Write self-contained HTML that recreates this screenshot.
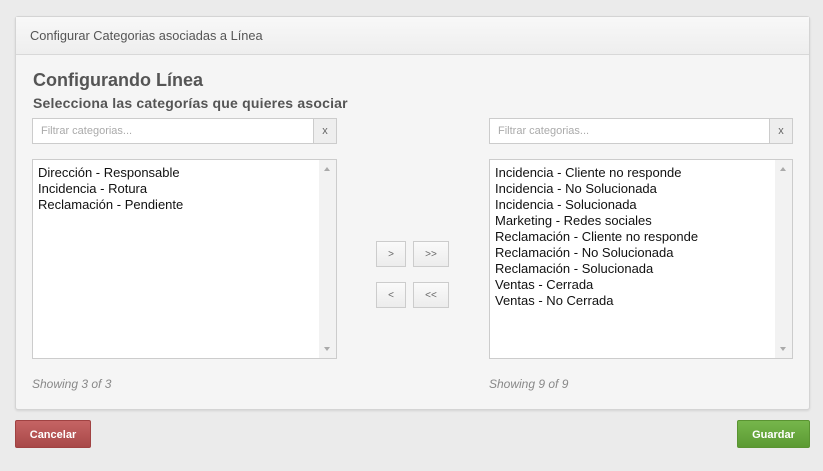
<!DOCTYPE html>
<html><head><style>
*{box-sizing:border-box;margin:0;padding:0}
body{width:823px;height:471px;background:#ebebeb;font-family:"Liberation Sans",sans-serif;position:relative;overflow:hidden}
.panel{position:absolute;left:15px;top:16px;width:795px;height:394px;background:#f5f5f5;border:1px solid #d4d4d4;border-radius:3px;box-shadow:0 1px 2px rgba(0,0,0,.1)}
.hdr{height:38px;border-bottom:1px solid #d8d8d8;background:linear-gradient(#f8f8f8,#eeeeee);font-size:12.8px;color:#555;padding:11px 14px}
h1{position:absolute;left:17px;top:53px;font-size:18px;color:#555;font-weight:bold}
h2{position:absolute;left:17px;top:78px;font-size:14px;letter-spacing:0.2px;color:#555;font-weight:bold}
.f{position:absolute;height:26px;border:1px solid #ccc;background:#fff;font-size:11px;color:#aaa;padding:6px 8px}
.f .x{position:absolute;right:0;top:0;width:23px;height:24px;border-left:1px solid #ccc;background:#eee;color:#666;text-align:center;font-size:11px;padding-top:6px}
.l{position:absolute;height:200px;border:1px solid #ccc;background:#fff;font-size:13px;color:#111;padding:5px 5px;line-height:16px}
.l .sb{position:absolute;right:0;top:0;width:17px;height:198px;background:#f2f2f2}
.l .sb:before{content:"";position:absolute;left:5px;top:7px;border:3.5px solid transparent;border-bottom:4px solid #aaa;border-top:0}
.l .sb:after{content:"";position:absolute;left:5px;bottom:7px;border:3.5px solid transparent;border-top:4px solid #aaa;border-bottom:0}
.b{position:absolute;height:26px;border:1px solid #ccc;background:linear-gradient(#fafafa,#ececec);font-size:10px;color:#666;text-align:center;padding-top:7px}
.s{position:absolute;top:360px;font-size:12px;font-style:italic;color:#888}
.btn{position:absolute;top:420px;height:28px;color:#fff;font-weight:bold;font-size:11px;text-align:center;padding-top:8px;border-radius:2px}
</style></head><body>
<div class="panel">
<div class="hdr">Configurar Categorias asociadas a Línea</div>
<h1>Configurando Línea</h1>
<h2>Selecciona las categorías que quieres asociar</h2>
<div class="f" style="left:16px;top:101px;width:305px">Filtrar categorias...<div class="x">x</div></div>
<div class="f" style="left:473px;top:101px;width:304px">Filtrar categorias...<div class="x">x</div></div>
<div class="l" style="left:16px;top:142px;width:305px">Dirección - Responsable<br>Incidencia - Rotura<br>Reclamación - Pendiente<div class="sb"></div></div>
<div class="l" style="left:473px;top:142px;width:304px">Incidencia - Cliente no responde<br>Incidencia - No Solucionada<br>Incidencia - Solucionada<br>Marketing - Redes sociales<br>Reclamación - Cliente no responde<br>Reclamación - No Solucionada<br>Reclamación - Solucionada<br>Ventas - Cerrada<br>Ventas - No Cerrada<div class="sb"></div></div>
<div class="b" style="left:360px;top:224px;width:30px">&gt;</div>
<div class="b" style="left:397px;top:224px;width:36px">&gt;&gt;</div>
<div class="b" style="left:360px;top:265px;width:30px">&lt;</div>
<div class="b" style="left:397px;top:265px;width:36px">&lt;&lt;</div>
<div class="s" style="left:16px">Showing 3 of 3</div>
<div class="s" style="left:473px">Showing 9 of 9</div>
</div>
<div class="btn" style="left:15px;width:76px;background:linear-gradient(#c56464,#a84848);border:1px solid #a04242">Cancelar</div>
<div class="btn" style="left:737px;width:73px;background:linear-gradient(#76b64b,#5c9a33);border:1px solid #5a9432">Guardar</div>
</body></html>
